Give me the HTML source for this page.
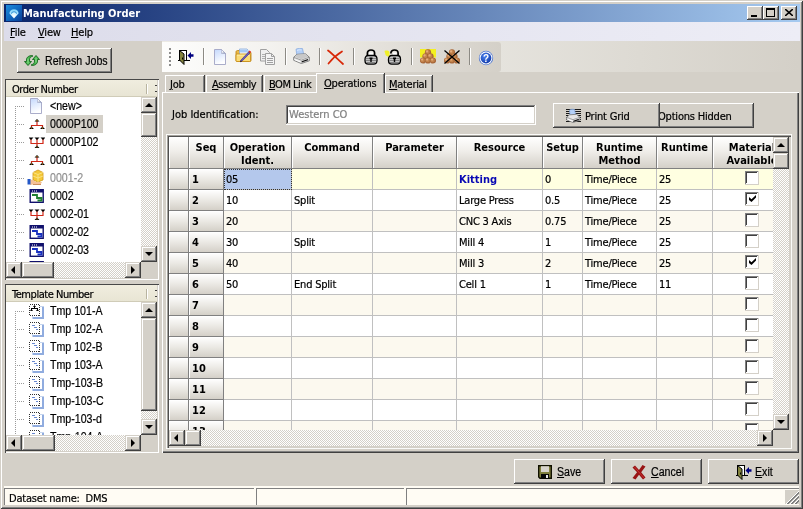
<!DOCTYPE html>
<html><head><meta charset="utf-8"><title>Manufacturing Order</title>
<style>
*{box-sizing:border-box;margin:0;padding:0}
html,body{width:803px;height:509px;overflow:hidden;background:#d4d0c8}
body{font-family:"DejaVu Sans Condensed","Liberation Sans",sans-serif;font-size:11px;color:#000;position:relative;line-height:13px;letter-spacing:-0.2px;-webkit-text-stroke:0.2px}
b,.hc,.rh,#title .t{letter-spacing:0;-webkit-text-stroke:0}
.ms{font-family:"Liberation Sans",sans-serif;font-size:12.5px;letter-spacing:0;transform:scaleX(.85);transform-origin:0 0;white-space:nowrap}
div,span,svg{position:absolute}
u{text-decoration:underline;text-underline-offset:1px;text-decoration-thickness:1px}
#win{left:0;top:0;width:803px;height:509px;background:#d4d0c8;will-change:transform;
 box-shadow:inset 1px 1px #d4d0c8,inset -1px -1px #404040,inset 2px 2px #fff,inset -2px -2px #808080}
#title{left:4px;top:4px;width:796px;height:18px;background:linear-gradient(90deg,#0a246a 0%,#a6caf0 100%)}
#title .t{left:19px;top:3px;color:#fff;font-weight:bold;font-size:11px;white-space:nowrap}
.cb{top:2px;width:16px;height:14px;background:#d4d0c8;
 box-shadow:inset -1px -1px #404040,inset 1px 1px #fff,inset -2px -2px #808080,inset 2px 2px #d4d0c8}
#menu{left:4px;top:22px;width:796px;height:19px;background:linear-gradient(90deg,#dcdcea,#ededf6)}
#menu span{top:4px}
.raised{background:#d4d0c8;box-shadow:inset -1px -1px #404040,inset 1px 1px #fff,inset -2px -2px #808080,inset 2px 2px #d4d0c8}
.sunken{box-shadow:inset -1px -1px #fff,inset 1px 1px #808080,inset -2px -2px #d4d0c8,inset 2px 2px #404040}
.btn{white-space:nowrap}
.btn span{white-space:nowrap}
.trk{background-color:#fff;background-image:conic-gradient(#d4d0c8 25%,#fff 0 50%,#d4d0c8 0 75%,#fff 0);background-size:2px 2px}
.sbb{width:16px;height:16px;background:#d4d0c8;box-shadow:inset -1px -1px #404040,inset 1px 1px #d4d0c8,inset -2px -2px #808080,inset 2px 2px #fff}
.thumb{background:#d4d0c8;box-shadow:inset -1px -1px #404040,inset 1px 1px #d4d0c8,inset -2px -2px #808080,inset 2px 2px #fff}
.ar{width:0;height:0;border:4px solid transparent}
.ar.up{border-top:0;border-bottom:4px solid #000;left:4px;top:6px}
.ar.dn{border-bottom:0;border-top:4px solid #000;left:4px;top:6px}
.ar.lf{border-left:0;border-right:4px solid #000;left:5px;top:4px}
.ar.rt{border-right:0;border-left:4px solid #000;left:6px;top:4px}
.panel{background:#fff}
.phead{left:2px;top:2px;height:16px;background:linear-gradient(180deg,#f0eddf,#e8e5d4);border-bottom:1px solid #d0ccb8}
.phead span{left:5px;top:1px;white-space:nowrap;letter-spacing:-0.45px}
.ti{left:0;height:18px;width:136px}
.ti .lbl{left:43px;top:3px}
.ti .sel{left:39px;top:0;height:18px;background:#d4d0c8}
.ti .hl{left:8px;top:9px;width:9px;border-top:1px dotted #9a9a9a}
.vl{left:15px;width:0;border-left:1px dotted #9a9a9a}
.sep{width:2px;height:17px;top:6px;border-left:1px solid #8c8a84;border-right:1px solid #fff}
.tab{height:18px;top:75px;background:#d4d0c8;border-top:1px solid #fff;border-left:1px solid #fff;box-shadow:1px 0 #404040, inset -1px 0 #808080}
.tab span{top:2px;white-space:nowrap}
#grid{left:166px;top:134px;width:626px;height:315px;background:#d4d0c8}
.hc{top:0;height:32px;background:linear-gradient(180deg,#fff 0%,#f0eeea 45%,#d4d0c8 100%);border-right:1px solid #808080;border-bottom:1px solid #808080;box-shadow:inset 1px 1px #fff;font-weight:bold;text-align:center;font-size:11px;line-height:13px;overflow:hidden}
.hc span{left:0;right:0;top:4px;position:absolute;text-align:center;white-space:nowrap}
.rh{left:0;height:21px;background:linear-gradient(180deg,#fff 0%,#ebe9e4 50%,#d4d0c8 100%);border-right:1px solid #808080;border-bottom:1px solid #808080;box-shadow:inset 1px 1px #fff;font-weight:bold}
.rh span{left:3px;top:4px}
.row{left:55px;height:21px;width:551px}
.c{top:0;height:21px;border-right:1px solid #c0c0c0;border-bottom:1px solid #c0c0c0;overflow:hidden}
.c span{left:2px;top:4px;white-space:nowrap}
.chk{width:14px;height:14px;left:32px;top:2px;background:#fff;box-shadow:inset -1px -1px #d4d0c8,inset 1px 1px #808080,inset -2px -2px #fff,inset 2px 2px #404040}
.sp{top:2px;height:17px;border-top:1px solid #808080;border-left:1px solid #808080}
</style></head><body>
<div id="win">
<div id="title"><svg style="left:2px;top:1px" width="16" height="16" viewBox="0 0 16 16"><defs><linearGradient id="ga" x1="0" y1="0" x2="1" y2="1"><stop offset="0" stop-color="#1c8cdc"/><stop offset=".5" stop-color="#1068c0"/><stop offset="1" stop-color="#083c94"/></linearGradient><radialGradient id="gb" cx=".5" cy=".75" r=".7"><stop offset="0" stop-color="#fff"/><stop offset=".6" stop-color="#c8f0ff"/><stop offset="1" stop-color="#7cd0f8"/></radialGradient></defs><rect width="16" height="16" fill="url(#ga)"/><path d="M3.300 8.200a4.800 4.800 0 0 1 9.400 0L8 13.500z" fill="url(#gb)"/><path d="M5.300 8.600a2.900 2.900 0 0 1 5.400 0" fill="none" stroke="#2890d8" stroke-width="1.100"/></svg><span class="t">Manufacturing Order</span><div class="cb" style="left:743px"><div style="left:4px;top:9px;width:6px;height:2px;background:#000"></div></div><div class="cb" style="left:759px"><div style="left:3px;top:2px;width:9px;height:9px;border:1px solid #000;border-top-width:2px"></div></div><div class="cb" style="left:777px"><svg style="left:4px;top:3px" width="8" height="7" viewBox="0 0 8 7"><path d="M0 0l8 7M8 0l-8 7" stroke="#000" stroke-width="1.600"/></svg></div></div>
<div id="menu"><span style="left:6px"><u>F</u>ile</span><span style="left:34px"><u>V</u>iew</span><span style="left:67px"><u>H</u>elp</span></div>
<div style="left:162px;top:41px;width:637px;height:31px;background:linear-gradient(90deg,#eceae4,#e6e4de 50%,#d4d0c8 100%)"></div>
<div class="btn raised" style="left:17px;top:48px;width:95px;height:25px"><svg style="left:7px;top:7px" width="16" height="11" viewBox="0 0 16 11"><path d="M8.500 .5C5 .5 2.500 2 2.500 5v1.500h-2l3.500 4 3.500-4h-2V5c0-2 1-3.500 3-3.500z" fill="#48b850" stroke="#186820" stroke-width=".9" stroke-linejoin="round"/><path d="M7.500 10.500c3.500 0 6-1.500 6-4.500V4.500h2l-3.500-4-3.500 4h2V6c0 2-1 3.500-3 3.500z" fill="#48b850" stroke="#186820" stroke-width=".9" stroke-linejoin="round"/><path d="M4 3.500v5M12 2.500v5" stroke="#90e090" stroke-width="1"/></svg><span class="ms" style="left:28px;top:7px">Refresh Jobs</span></div>
<div class="panel" style="left:5px;top:79px;width:154px;height:201px"><div class="phead" style="left:1px;top:1px;height:17px;width:151px"><span style="left:6px;top:3px">Order Number</span><div style="left:140px;top:4px;width:1px;height:10px;background:#b8b4a0"></div><div style="left:141px;top:4px;width:1px;height:10px;background:#fff"></div><div style="left:149px;top:5px;width:2px;height:1px;background:#404040"></div><div style="left:149px;top:11px;width:2px;height:1px;background:#404040"></div></div><div style="left:2px;top:18px;width:134px;height:165px;overflow:hidden"><div class="vl" style="left:8px;top:9px;height:165px"></div><div class="ti" style="top:0px"><div class="hl"></div><svg style="left:21px;top:1px" width="16" height="16" viewBox="0 0 16 16"><defs><linearGradient id="gd" x1="0" y1="0" x2=".3" y2="1"><stop offset="0" stop-color="#c4d8fc"/><stop offset="1" stop-color="#fff"/></linearGradient><linearGradient id="gf" x1="0" y1="0" x2="1" y2="1"><stop offset=".3" stop-color="#fff"/><stop offset="1" stop-color="#7888a8"/></linearGradient></defs><path d="M2.500 .5h7l4 4v11h-11z" fill="url(#gd)" stroke="#a0a4c4" stroke-width=".9"/><path d="M9.500 .5v4h4z" fill="url(#gf)" stroke="#a0a4c4" stroke-width=".6"/></svg><span class="lbl ms" style="color:#000">&lt;new&gt;</span></div><div class="ti" style="top:18px"><div class="hl"></div><svg style="left:22px;top:1px" width="16" height="16" viewBox="0 0 16 16"><path d="M8 5v4.500M2.500 11V9.500h11V11" fill="none" stroke="#d02818" stroke-width="1.200"/><path d="M5.500 5.500l2.500-2.500 2.500 2.500zM0 13l2.500-2.500 2.500 2.500zM11 13l2.500-2.500 2.500 2.500z" fill="#000"/><path d="M7.500 4.500h1M2 12h1M13 12h1" stroke="#f0a020"/></svg><div class="sel" style="width:57px"></div><span class="lbl ms" style="color:#000">0000P100</span></div><div class="ti" style="top:36px"><div class="hl"></div><svg style="left:22px;top:1px" width="16" height="16" viewBox="0 0 16 16"><path d="M2 5v4.500h12V5M8 5v7" fill="none" stroke="#d02818" stroke-width="1.200"/><path d="M-.5 3.500h5l-2.500 2.500zM5.500 3.500h5l-2.500 2.500zM11.500 3.500h5l-2.500 2.500zM5.500 14l2.500-2.500 2.500 2.500z" fill="#000"/><path d="M7.500 13h1" stroke="#f0a020"/></svg><span class="lbl ms" style="color:#000">0000P102</span></div><div class="ti" style="top:54px"><div class="hl"></div><svg style="left:22px;top:1px" width="16" height="16" viewBox="0 0 16 16"><path d="M8 5v4.500M2.500 11V9.500h11V11" fill="none" stroke="#d02818" stroke-width="1.200"/><path d="M5.500 5.500l2.500-2.500 2.500 2.500zM0 13l2.500-2.500 2.500 2.500zM11 13l2.500-2.500 2.500 2.500z" fill="#000"/><path d="M7.500 4.500h1M2 12h1M13 12h1" stroke="#f0a020"/></svg><span class="lbl ms" style="color:#000">0001</span></div><div class="ti" style="top:72px"><div class="hl"></div><svg style="left:20px;top:0px" width="18" height="17" viewBox="0 0 18 17"><path d="M6 3.500l5-2.500 5 2.500v7.500l-5 2-5-2z" fill="#f4c838" stroke="#d09818" stroke-width=".8"/><path d="M6 3.500l5 2 5-2M11 5.500v7.500M6 7l5 2 5-2" fill="none" stroke="#fbe890" stroke-width=".8"/><path d="M3 10.500l3 .5 3 2h6l-1.500 2.500H6l-3 .5z" fill="#f4c098"/><path d="M6 15.500h8" stroke="#c07840" stroke-width=".8"/><rect x=".5" y="10" width="3" height="5.500" fill="#2458c8"/></svg><span class="lbl ms" style="color:#909090">0001-2</span></div><div class="ti" style="top:90px"><div class="hl"></div><svg style="left:22px;top:1px" width="16" height="16" viewBox="0 0 16 16"><rect x="1.200" y="1.700" width="13" height="12.600" fill="#fff" stroke="#10106c" stroke-width="1.400"/><rect x="1" y="1.500" width="13.400" height="3" fill="#10106c"/><path d="M3 3h1M5 3h1M7 3h1" stroke="#fff"/><path d="M3 7h5v3h4.500v2.500h-4" fill="none" stroke="#208030" stroke-width="1.800"/></svg><span class="lbl ms" style="color:#000">0002</span></div><div class="ti" style="top:108px"><div class="hl"></div><svg style="left:22px;top:1px" width="16" height="16" viewBox="0 0 16 16"><path d="M2 5v4.500h12V5M8 5v7" fill="none" stroke="#d02818" stroke-width="1.200"/><path d="M-.5 3.500h5l-2.500 2.500zM5.500 3.500h5l-2.500 2.500zM11.500 3.500h5l-2.500 2.500zM5.500 14l2.500-2.500 2.500 2.500z" fill="#000"/><path d="M7.500 13h1" stroke="#f0a020"/></svg><span class="lbl ms" style="color:#000">0002-01</span></div><div class="ti" style="top:126px"><div class="hl"></div><svg style="left:22px;top:1px" width="16" height="16" viewBox="0 0 16 16"><rect x="1.200" y="1.700" width="13" height="12.600" fill="#fff" stroke="#10106c" stroke-width="1.400"/><rect x="1" y="1.500" width="13.400" height="3" fill="#10106c"/><path d="M3 3h1M5 3h1M7 3h1" stroke="#fff"/><path d="M3 7h5v3h4.500v2.500h-4" fill="none" stroke="#1830c0" stroke-width="1.800"/></svg><span class="lbl ms" style="color:#000">0002-02</span></div><div class="ti" style="top:144px"><div class="hl"></div><svg style="left:22px;top:1px" width="16" height="16" viewBox="0 0 16 16"><rect x="1.200" y="1.700" width="13" height="12.600" fill="#fff" stroke="#10106c" stroke-width="1.400"/><rect x="1" y="1.500" width="13.400" height="3" fill="#10106c"/><path d="M3 3h1M5 3h1M7 3h1" stroke="#fff"/><path d="M3 7h5v3h4.500v2.500h-4" fill="none" stroke="#1830c0" stroke-width="1.800"/></svg><span class="lbl ms" style="color:#000">0002-03</span></div><div class="ti" style="top:162px"><div class="hl"></div><svg style="left:22px;top:1px" width="16" height="16" viewBox="0 0 16 16"><rect x="1.200" y="1.700" width="13" height="12.600" fill="#fff" stroke="#10106c" stroke-width="1.400"/><rect x="1" y="1.500" width="13.400" height="3" fill="#10106c"/><path d="M3 3h1M5 3h1M7 3h1" stroke="#fff"/><path d="M3 7h5v3h4.500v2.500h-4" fill="none" stroke="#1830c0" stroke-width="1.800"/></svg><span class="lbl ms" style="color:#000">0002-04</span></div></div><div class="trk" style="left:136px;top:18px;width:16px;height:165px"><div class="sbb" style="left:0;top:0"><div class="ar up"></div></div><div class="thumb" style="left:0;top:16px;width:16px;height:24px"></div><div class="sbb" style="left:0;top:149px"><div class="ar dn"></div></div></div><div class="trk" style="left:1px;top:183px;width:135px;height:16px"><div class="sbb" style="left:0;top:0"><div class="ar lf"></div></div><div class="thumb" style="left:16px;top:0;width:32px;height:16px"></div><div class="sbb" style="left:119px;top:0"><div class="ar rt"></div></div></div><div style="left:136px;top:183px;width:17px;height:17px;background:#d4d0c8"></div><div style="left:1px;top:199px;width:152px;height:1px;background:#d4d0c8"></div><div style="left:152px;top:1px;width:1px;height:199px;background:#d4d0c8"></div><div style="left:0;top:0;width:154px;height:201px;box-shadow:inset 1px 1px #484848,inset -1px -1px #fff"></div></div>
<div class="panel" style="left:5px;top:284px;width:154px;height:169px"><div class="phead" style="left:1px;top:1px;height:17px;width:151px"><span style="left:6px;top:3px">Template Number</span><div style="left:140px;top:4px;width:1px;height:10px;background:#b8b4a0"></div><div style="left:141px;top:4px;width:1px;height:10px;background:#fff"></div><div style="left:149px;top:5px;width:2px;height:1px;background:#404040"></div><div style="left:149px;top:11px;width:2px;height:1px;background:#404040"></div></div><div style="left:2px;top:18px;width:134px;height:133px;overflow:hidden"><div class="vl" style="left:8px;top:9px;height:133px"></div><div class="ti" style="top:0px"><div class="hl"></div><svg style="left:22px;top:1px" width="16" height="17" viewBox="0 0 16 17" shape-rendering="crispEdges"><rect x="3.500" y="3.500" width="11" height="12" fill="#fff" stroke="#c4d4ee"/><path d="M13.500 4v12M4 15h10" stroke="#90acdf" stroke-width="2" fill="none"/><rect x=".5" y="1.500" width="10" height="11" fill="#fff" stroke="#303030" stroke-dasharray="1 1"/><path d="M5.500 3.500v2M2.500 7V5.500h6V7" fill="none" stroke="#000" stroke-width="1"/><path d="M1 8h3l-1.500-2zM7 8h3l-1.500-2zM4 4h3l-1.500-2z" fill="#000" shape-rendering="auto"/></svg><span class="lbl ms" style="color:#000">Tmp 101-A</span></div><div class="ti" style="top:18px"><div class="hl"></div><svg style="left:22px;top:1px" width="16" height="17" viewBox="0 0 16 17" shape-rendering="crispEdges"><rect x="3.500" y="3.500" width="11" height="12" fill="#fff" stroke="#c4d4ee"/><path d="M13.500 4v12M4 15h10" stroke="#90acdf" stroke-width="2" fill="none"/><rect x=".5" y="1.500" width="10" height="11" fill="#fff" stroke="#303030" stroke-dasharray="1 1"/><path d="M3 4.500h3M5 6.500h3M7 8.500h2" fill="none" stroke="#6888d0" stroke-width="1"/></svg><span class="lbl ms" style="color:#000">Tmp 102-A</span></div><div class="ti" style="top:36px"><div class="hl"></div><svg style="left:22px;top:1px" width="16" height="17" viewBox="0 0 16 17" shape-rendering="crispEdges"><rect x="3.500" y="3.500" width="11" height="12" fill="#fff" stroke="#c4d4ee"/><path d="M13.500 4v12M4 15h10" stroke="#90acdf" stroke-width="2" fill="none"/><rect x=".5" y="1.500" width="10" height="11" fill="#fff" stroke="#303030" stroke-dasharray="1 1"/><path d="M3 4.500h3M5 6.500h3M7 8.500h2" fill="none" stroke="#6888d0" stroke-width="1"/></svg><span class="lbl ms" style="color:#000">Tmp 102-B</span></div><div class="ti" style="top:54px"><div class="hl"></div><svg style="left:22px;top:1px" width="16" height="17" viewBox="0 0 16 17" shape-rendering="crispEdges"><rect x="3.500" y="3.500" width="11" height="12" fill="#fff" stroke="#c4d4ee"/><path d="M13.500 4v12M4 15h10" stroke="#90acdf" stroke-width="2" fill="none"/><rect x=".5" y="1.500" width="10" height="11" fill="#fff" stroke="#303030" stroke-dasharray="1 1"/><path d="M3 4.500h3M5 6.500h3M7 8.500h2" fill="none" stroke="#6888d0" stroke-width="1"/></svg><span class="lbl ms" style="color:#000">Tmp 103-A</span></div><div class="ti" style="top:72px"><div class="hl"></div><svg style="left:22px;top:1px" width="16" height="17" viewBox="0 0 16 17" shape-rendering="crispEdges"><rect x="3.500" y="3.500" width="11" height="12" fill="#fff" stroke="#c4d4ee"/><path d="M13.500 4v12M4 15h10" stroke="#90acdf" stroke-width="2" fill="none"/><rect x=".5" y="1.500" width="10" height="11" fill="#fff" stroke="#303030" stroke-dasharray="1 1"/><path d="M3 4.500h3M5 6.500h3M7 8.500h2" fill="none" stroke="#6888d0" stroke-width="1"/></svg><span class="lbl ms" style="color:#000">Tmp-103-B</span></div><div class="ti" style="top:90px"><div class="hl"></div><svg style="left:22px;top:1px" width="16" height="17" viewBox="0 0 16 17" shape-rendering="crispEdges"><rect x="3.500" y="3.500" width="11" height="12" fill="#fff" stroke="#c4d4ee"/><path d="M13.500 4v12M4 15h10" stroke="#90acdf" stroke-width="2" fill="none"/><rect x=".5" y="1.500" width="10" height="11" fill="#fff" stroke="#303030" stroke-dasharray="1 1"/><path d="M3 4.500h3M5 6.500h3M7 8.500h2" fill="none" stroke="#6888d0" stroke-width="1"/></svg><span class="lbl ms" style="color:#000">Tmp-103-C</span></div><div class="ti" style="top:108px"><div class="hl"></div><svg style="left:22px;top:1px" width="16" height="17" viewBox="0 0 16 17" shape-rendering="crispEdges"><rect x="3.500" y="3.500" width="11" height="12" fill="#fff" stroke="#c4d4ee"/><path d="M13.500 4v12M4 15h10" stroke="#90acdf" stroke-width="2" fill="none"/><rect x=".5" y="1.500" width="10" height="11" fill="#fff" stroke="#303030" stroke-dasharray="1 1"/><path d="M3 4.500h3M5 6.500h3M7 8.500h2" fill="none" stroke="#6888d0" stroke-width="1"/></svg><span class="lbl ms" style="color:#000">Tmp-103-d</span></div><div class="ti" style="top:126px"><div class="hl"></div><svg style="left:22px;top:1px" width="16" height="17" viewBox="0 0 16 17" shape-rendering="crispEdges"><rect x="3.500" y="3.500" width="11" height="12" fill="#fff" stroke="#c4d4ee"/><path d="M13.500 4v12M4 15h10" stroke="#90acdf" stroke-width="2" fill="none"/><rect x=".5" y="1.500" width="10" height="11" fill="#fff" stroke="#303030" stroke-dasharray="1 1"/><path d="M3 4.500h3M5 6.500h3M7 8.500h2" fill="none" stroke="#6888d0" stroke-width="1"/></svg><span class="lbl ms" style="color:#000">Tmp-104-A</span></div></div><div class="trk" style="left:136px;top:18px;width:16px;height:133px"><div class="sbb" style="left:0;top:0"><div class="ar up"></div></div><div class="thumb" style="left:0;top:16px;width:16px;height:93px"></div><div class="sbb" style="left:0;top:117px"><div class="ar dn"></div></div></div><div class="trk" style="left:1px;top:151px;width:135px;height:16px"><div class="sbb" style="left:0;top:0"><div class="ar lf"></div></div><div class="thumb" style="left:16px;top:0;width:33px;height:16px"></div><div class="sbb" style="left:119px;top:0"><div class="ar rt"></div></div></div><div style="left:136px;top:151px;width:17px;height:17px;background:#d4d0c8"></div><div style="left:1px;top:167px;width:152px;height:1px;background:#d4d0c8"></div><div style="left:152px;top:1px;width:1px;height:167px;background:#d4d0c8"></div><div style="left:0;top:0;width:154px;height:169px;box-shadow:inset 1px 1px #484848,inset -1px -1px #fff"></div></div>
<div style="left:162px;top:42px;width:339px;height:30px;background:linear-gradient(90deg,#fdfdfc 0%,#f4f3f0 30%,#e4e1db 65%,#d4d0c8 100%);border-radius:0 3px 3px 0"><div style="left:7px;top:6px;width:2px;height:2px;background:#8c8c8c"></div><div style="left:7px;top:10px;width:2px;height:2px;background:#8c8c8c"></div><div style="left:7px;top:14px;width:2px;height:2px;background:#8c8c8c"></div><div style="left:7px;top:18px;width:2px;height:2px;background:#8c8c8c"></div><div style="left:7px;top:22px;width:2px;height:2px;background:#8c8c8c"></div><svg style="left:15px;top:7px" width="17" height="16" viewBox="0 0 17 16"><rect x="2.500" y="1.500" width="7" height="10" fill="#fff" stroke="#000"/><path d="M1 11.500h12" stroke="#000"/><path d="M2.500 1.500l4.500 3.500v10.500l-4.500-4.500z" fill="#84843e" stroke="#000" stroke-width="1"/><path d="M5.500 8.500v2" stroke="#000"/><path d="M10.500 6.500l3.500-3.500v2.200h2.500v2.600H14V10z" fill="#000080"/></svg><div class="sep" style="left:41px"></div><svg style="left:50px;top:7px" width="16" height="16" viewBox="0 0 16 16"><defs><linearGradient id="gd" x1="0" y1="0" x2=".3" y2="1"><stop offset="0" stop-color="#c4d8fc"/><stop offset="1" stop-color="#fff"/></linearGradient><linearGradient id="gf" x1="0" y1="0" x2="1" y2="1"><stop offset=".3" stop-color="#fff"/><stop offset="1" stop-color="#7888a8"/></linearGradient></defs><path d="M2.500 .5h7l4 4v11h-11z" fill="url(#gd)" stroke="#a0a4c4" stroke-width=".9"/><path d="M9.500 .5v4h4z" fill="url(#gf)" stroke="#a0a4c4" stroke-width=".6"/></svg><svg style="left:73px;top:6px" width="17" height="16" viewBox="0 0 17 16"><path d="M1 4c0-1 .8-1.500 1.500-1.500h2.500l1 1.500h9c.7 0 1 .5 1 1v7.500c0 .6-.5 1-1 1h-13c-.6 0-1-.4-1-1z" fill="#eab848" stroke="#c08818" stroke-width=".9"/><path d="M4.500 1h7.500l1 1v7h-8.500z" fill="#fff" stroke="#88a8d8" stroke-width=".8"/><path d="M4.900 1.400h7l.7 .8v2.300h-7.700z" fill="#a4c8f6"/><path d="M1 7c0-.6.500-1 1-1h12.500c.6 0 1 .4 1 1v5.500c0 .6-.5 1-1 1h-12.500c-.6 0-1-.4-1-1z" fill="#fbdc78" stroke="#c8901c" stroke-width=".9"/><path d="M2 7.200h12.500" stroke="#fdf0b8" stroke-width=".8"/><path d="M13.800 3.800l1.200 1.200-8 8.200-1.600 .6 .5-1.700z" fill="#6c5cc0" stroke="#3c3078" stroke-width=".6"/><path d="M13.600 3.600l1.100-1.200 1.500 1.500-1.200 1.100z" fill="#e02424"/><path d="M5.200 14l.5-1.700 1.100 1.100z" fill="#301808"/></svg><svg style="left:98px;top:7px" width="16" height="16" viewBox="0 0 16 16"><path d="M.5 .5h6l3 3v8.500h-9z" fill="#f0f0f0" stroke="#a0a0a0"/><path d="M2 5.500h4M2 7.500h3M2 9.500h3" stroke="#b0b0b0"/><path d="M5.500 4.500h6l3 3v8h-9z" fill="#f4f4f4" stroke="#a0a0a0"/><path d="M11.500 4.500v3h3" fill="none" stroke="#a0a0a0"/><path d="M7 9.500h6M7 11.500h6M7 13.500h6" stroke="#a0a0a0"/></svg><div class="sep" style="left:123px"></div><svg style="left:131px;top:6px" width="17" height="16" viewBox="0 0 17 16"><path d="M3 1.200c2.500-1.200 4.500-1 6.500-.6l1.500 7-7 1.500-.5-4z" fill="#b4d0f8" stroke="#84a8dc" stroke-width=".7"/><path d="M4 2.500c1.500-.8 3-.8 4.500-.5" stroke="#e4f0ff" stroke-width=".8" fill="none"/><path d="M.7 9.300l3.300-3 8.500-.5 3.800 3.400v3.600l-8 2.700-7.600-3.200z" fill="#e4e4e4" stroke="#787878" stroke-width=".9"/><path d="M.7 9.300l7.600 2.900 8-3" fill="none" stroke="#8c8c8c" stroke-width=".8"/><path d="M4.300 6.600l8-.5 2.700 2.700-6.700 2.400-6-2.300z" fill="#c8c8c8"/><path d="M8.600 13.300l6.400-2.300v1.300l-6.400 2.300z" fill="#101010"/><path d="M1.500 11l6 2.400v1.200l-6-2.500z" fill="#fff"/></svg><div class="sep" style="left:157px"></div><svg style="left:165px;top:7px" width="17" height="16" viewBox="0 0 17 16"><path d="M1 1.500c4 3 9 8 15 13.500M15 2.500c-5 3-10 7.500-13.500 12" fill="none" stroke="#d82808" stroke-width="1.700" stroke-linecap="round"/></svg><div class="sep" style="left:191px"></div><svg style="left:202px;top:7px" width="15" height="16" viewBox="0 0 15 16"><path d="M3.400 7v-3c0-1.800 1.400-3 3.600-3s3.600 1.200 3.600 3v3" fill="none" stroke="#000" stroke-width="1.700"/><rect x="5" y="3.500" width="4" height="3" fill="#fff"/><path d="M1 10.300c0-2.700 1.500-3.800 3.200-3.800h5.600c1.700 0 3.200 1.100 3.200 3.800v1.200c0 2.600-1.500 3.700-3.200 3.700h-5.600c-1.700 0-3.200-1.100-3.200-3.700z" fill="#c4c4c4" stroke="#000" stroke-width="1.300"/><path d="M2 9.500h10M2 11.500h10M2.500 13.500h9" stroke="#7c7c7c" stroke-width=".9"/><path d="M5.500 8.500h3v1.500l-.8 .5v2.500h-1.400v-2.500l-.8-.5z" fill="#000"/></svg><svg style="left:222px;top:7px" width="18" height="16" viewBox="0 0 18 16"><path d="M.5 2c2-.8 4-.3 5 1v4.500c-1.500 .3-3.500-.5-4-1.800z" fill="#f0f028"/><g transform="translate(3.500 0)"><path d="M3.400 4.500v-.5c0-1.800 1.400-3 3.600-3s3.600 1.200 3.600 3v3" fill="none" stroke="#000" stroke-width="1.700"/><rect x="5.500" y="3.500" width="3.500" height="3" fill="#fff"/><path d="M1 10.300c0-2.700 1.500-3.800 3.200-3.800h5.600c1.700 0 3.200 1.100 3.200 3.800v1.200c0 2.600-1.500 3.700-3.200 3.700h-5.600c-1.700 0-3.200-1.100-3.200-3.700z" fill="#c4c4c4" stroke="#000" stroke-width="1.300"/><path d="M2 9.500h10M2 11.500h10M2.500 13.500h9" stroke="#7c7c7c" stroke-width=".9"/><path d="M5.500 8.500h3v1.500l-.8 .5v2.500h-1.400v-2.500l-.8-.5z" fill="#000"/></g></svg><div class="sep" style="left:249px"></div><svg style="left:258px;top:7px" width="16" height="15" viewBox="0 0 16 15"><rect x="0" y="0" width="16" height="8.500" fill="#f4f020"/><circle cx="8" cy="3.3" r="3.100" fill="#a8683a"/><circle cx="7.6" cy="2.9" r="2.200" fill="#c4844c"/><circle cx="7.1" cy="2.4" r="1.100" fill="#e4ac7c"/><circle cx="5.5" cy="7.3" r="3.100" fill="#a8683a"/><circle cx="5.1" cy="6.8999999999999995" r="2.200" fill="#c4844c"/><circle cx="4.6" cy="6.3999999999999995" r="1.100" fill="#e4ac7c"/><circle cx="10.5" cy="7.3" r="3.100" fill="#a8683a"/><circle cx="10.1" cy="6.8999999999999995" r="2.200" fill="#c4844c"/><circle cx="9.6" cy="6.3999999999999995" r="1.100" fill="#e4ac7c"/><circle cx="3" cy="11.5" r="3.100" fill="#a8683a"/><circle cx="2.6" cy="11.1" r="2.200" fill="#c4844c"/><circle cx="2.1" cy="10.6" r="1.100" fill="#e4ac7c"/><circle cx="8" cy="11.5" r="3.100" fill="#a8683a"/><circle cx="7.6" cy="11.1" r="2.200" fill="#c4844c"/><circle cx="7.1" cy="10.6" r="1.100" fill="#e4ac7c"/><circle cx="13" cy="11.5" r="3.100" fill="#a8683a"/><circle cx="12.6" cy="11.1" r="2.200" fill="#c4844c"/><circle cx="12.1" cy="10.6" r="1.100" fill="#e4ac7c"/></svg><svg style="left:282px;top:7px" width="16" height="15" viewBox="0 0 16 15"><circle cx="8" cy="3.3" r="3.100" fill="#a8683a"/><circle cx="7.6" cy="2.9" r="2.200" fill="#c4844c"/><circle cx="7.1" cy="2.4" r="1.100" fill="#e4ac7c"/><circle cx="5.5" cy="7.3" r="3.100" fill="#a8683a"/><circle cx="5.1" cy="6.8999999999999995" r="2.200" fill="#c4844c"/><circle cx="4.6" cy="6.3999999999999995" r="1.100" fill="#e4ac7c"/><circle cx="10.5" cy="7.3" r="3.100" fill="#a8683a"/><circle cx="10.1" cy="6.8999999999999995" r="2.200" fill="#c4844c"/><circle cx="9.6" cy="6.3999999999999995" r="1.100" fill="#e4ac7c"/><circle cx="3" cy="11.5" r="3.100" fill="#a8683a"/><circle cx="2.6" cy="11.1" r="2.200" fill="#c4844c"/><circle cx="2.1" cy="10.6" r="1.100" fill="#e4ac7c"/><circle cx="8" cy="11.5" r="3.100" fill="#a8683a"/><circle cx="7.6" cy="11.1" r="2.200" fill="#c4844c"/><circle cx="7.1" cy="10.6" r="1.100" fill="#e4ac7c"/><circle cx="13" cy="11.5" r="3.100" fill="#a8683a"/><circle cx="12.6" cy="11.1" r="2.200" fill="#c4844c"/><circle cx="12.1" cy="10.6" r="1.100" fill="#e4ac7c"/><path d="M.5 1.500l15 13M15.500 1.500l-15 13" stroke="#000" stroke-width="1.300"/></svg><div class="sep" style="left:307px"></div><svg style="left:316px;top:8px" width="16" height="16" viewBox="0 0 16 16"><defs><radialGradient id="gh" cx=".4" cy=".35" r=".7"><stop offset="0" stop-color="#4c84f0"/><stop offset="1" stop-color="#1038a8"/></radialGradient></defs><circle cx="8" cy="8" r="7.200" fill="#5078d0"/><circle cx="8" cy="8" r="6.400" fill="#fff"/><circle cx="8" cy="8" r="5.400" fill="url(#gh)"/><text x="8" y="11.500" font-family="Liberation Sans,sans-serif" font-weight="bold" font-size="10" fill="#fff" text-anchor="middle">?</text></svg></div>
<div class="tab" style="left:165px;width:39px;"><span style="left:4px;letter-spacing:-0.2px"><u>J</u>ob</span></div><div class="tab" style="left:206px;width:56px;"><span style="left:5px;letter-spacing:-0.45px"><u>A</u>ssembly</span></div><div class="tab" style="left:264px;width:52px;box-shadow:none"><span style="left:4px;letter-spacing:-0.5px"><u>B</u>OM Link</span></div><div class="tab" style="left:385px;width:47px;"><span style="left:3px;letter-spacing:-0.3px"><u>M</u>aterial</span></div><div style="left:162px;top:92px;width:637px;height:361px;background:#d4d0c8;box-shadow:inset 1px 1px #fff,inset -1px -1px #404040,inset -2px -2px #808080"></div><div style="left:316px;top:73px;width:68px;height:20px;background:#d4d0c8;border-top:1px solid #fff;border-left:1px solid #fff;box-shadow:1px 0 #404040, inset -1px 0 #808080"><span style="left:7px;top:3px;white-space:nowrap"><u>O</u>perations</span></div>
<span style="left:172px;top:108px;white-space:nowrap;letter-spacing:0">Job Identification:</span><div class="sunken" style="left:286px;top:105px;width:250px;height:20px;background:#fff"><span style="left:3px;top:3px;color:#808080;white-space:nowrap;letter-spacing:0">Western CO</span></div><div class="btn raised" style="left:656px;top:103px;width:98px;height:25px;overflow:hidden"><span style="left:2px;top:7px">Options Hidden</span></div><div class="btn raised" style="left:553px;top:103px;width:107px;height:25px"><svg style="left:12px;top:5px" width="17" height="16" viewBox="0 0 17 16"><path d="M1 1.500h15M1 3.500h15M1 5.500h15M1 7.500h15M1 9.500h15M1 11.500h15M1 13.500h15" stroke="#181818" shape-rendering="crispEdges"/><path d="M4.500 2c1.500-1 3.500-1 5-.5l1.200 5.500-5.500 1.200z" fill="#b4d0f8" stroke="#84a8dc" stroke-width=".7"/><path d="M1.700 9.300l2.800-2.500 7-.5 3.300 2.900v3l-6.800 2.300-6.300-2.700z" fill="#e6e6e6" stroke="#808080" stroke-width=".9"/><path d="M1.700 9.300l6.300 2.400 6.800-2.500" fill="none" stroke="#909090" stroke-width=".8"/><path d="M8.300 12.800l5.500-2v1.200l-5.500 2z" fill="#101010"/><path d="M2.500 10.800l5 2v1l-5-2z" fill="#fff"/></svg><span style="left:32px;top:7px">Print Grid</span></div>
<div id="grid"><div style="left:3px;top:3px;width:620px;height:309px;overflow:hidden;background:#fff"><div class="hc" style="left:0px;width:20px"><span></span></div><div class="hc" style="left:20px;width:35px"><span>Seq</span></div><div class="hc" style="left:55px;width:68px"><span>Operation<br>Ident.</span></div><div class="hc" style="left:123px;width:81px"><span>Command</span></div><div class="hc" style="left:204px;width:84px"><span>Parameter</span></div><div class="hc" style="left:288px;width:86px"><span>Resource</span></div><div class="hc" style="left:374px;width:40px"><span>Setup</span></div><div class="hc" style="left:414px;width:74px"><span>Runtime<br>Method</span></div><div class="hc" style="left:488px;width:56px"><span>Runtime</span></div><div class="hc" style="left:544px;width:62px"><span style="left:9px;width:60px;right:auto">Material<br>Available</span></div><div class="rh" style="top:32px;width:20px"></div><div class="rh" style="left:20px;top:32px;width:35px"><span>1</span></div><div class="row" style="top:32px;background:#ffffe1"><div class="c" style="left:0px;width:68px;background:#b4c8ec;outline:1px dotted #333;outline-offset:-1px;"><span style="">05</span></div><div class="c" style="left:68px;width:81px;"><span style=""></span></div><div class="c" style="left:149px;width:84px;"><span style=""></span></div><div class="c" style="left:233px;width:86px;"><span style="font-weight:bold;color:#0808b4;letter-spacing:0;-webkit-text-stroke:0">Kitting</span></div><div class="c" style="left:319px;width:40px;"><span style="">0</span></div><div class="c" style="left:359px;width:74px;"><span style="">Time/Piece</span></div><div class="c" style="left:433px;width:56px;"><span style="">25</span></div><div class="c" style="left:489px;width:62px"><div class="chk"></div></div></div><div class="rh" style="top:53px;width:20px"></div><div class="rh" style="left:20px;top:53px;width:35px"><span>2</span></div><div class="row" style="top:53px;background:#fff"><div class="c" style="left:0px;width:68px;"><span style="">10</span></div><div class="c" style="left:68px;width:81px;"><span style="">Split</span></div><div class="c" style="left:149px;width:84px;"><span style=""></span></div><div class="c" style="left:233px;width:86px;"><span style="">Large Press</span></div><div class="c" style="left:319px;width:40px;"><span style="">0.5</span></div><div class="c" style="left:359px;width:74px;"><span style="">Time/Piece</span></div><div class="c" style="left:433px;width:56px;"><span style="">25</span></div><div class="c" style="left:489px;width:62px"><div class="chk"><svg style="left:4px;top:3px" width="7" height="7" viewBox="0 0 7 7"><path d="M0 2v3l2.500 2 4.500-4.500V0L2.500 4.200z" fill="#000"/></svg></div></div></div><div class="rh" style="top:74px;width:20px"></div><div class="rh" style="left:20px;top:74px;width:35px"><span>3</span></div><div class="row" style="top:74px;background:#fcf9ef"><div class="c" style="left:0px;width:68px;"><span style="">20</span></div><div class="c" style="left:68px;width:81px;"><span style=""></span></div><div class="c" style="left:149px;width:84px;"><span style=""></span></div><div class="c" style="left:233px;width:86px;"><span style="">CNC 3 Axis</span></div><div class="c" style="left:319px;width:40px;"><span style="">0.75</span></div><div class="c" style="left:359px;width:74px;"><span style="">Time/Piece</span></div><div class="c" style="left:433px;width:56px;"><span style="">25</span></div><div class="c" style="left:489px;width:62px"><div class="chk"></div></div></div><div class="rh" style="top:95px;width:20px"></div><div class="rh" style="left:20px;top:95px;width:35px"><span>4</span></div><div class="row" style="top:95px;background:#fff"><div class="c" style="left:0px;width:68px;"><span style="">30</span></div><div class="c" style="left:68px;width:81px;"><span style="">Split</span></div><div class="c" style="left:149px;width:84px;"><span style=""></span></div><div class="c" style="left:233px;width:86px;"><span style="">Mill 4</span></div><div class="c" style="left:319px;width:40px;"><span style="">1</span></div><div class="c" style="left:359px;width:74px;"><span style="">Time/Piece</span></div><div class="c" style="left:433px;width:56px;"><span style="">25</span></div><div class="c" style="left:489px;width:62px"><div class="chk"></div></div></div><div class="rh" style="top:116px;width:20px"></div><div class="rh" style="left:20px;top:116px;width:35px"><span>5</span></div><div class="row" style="top:116px;background:#fcf9ef"><div class="c" style="left:0px;width:68px;"><span style="">40</span></div><div class="c" style="left:68px;width:81px;"><span style=""></span></div><div class="c" style="left:149px;width:84px;"><span style=""></span></div><div class="c" style="left:233px;width:86px;"><span style="">Mill 3</span></div><div class="c" style="left:319px;width:40px;"><span style="">2</span></div><div class="c" style="left:359px;width:74px;"><span style="">Time/Piece</span></div><div class="c" style="left:433px;width:56px;"><span style="">25</span></div><div class="c" style="left:489px;width:62px"><div class="chk"><svg style="left:4px;top:3px" width="7" height="7" viewBox="0 0 7 7"><path d="M0 2v3l2.500 2 4.500-4.500V0L2.500 4.200z" fill="#000"/></svg></div></div></div><div class="rh" style="top:137px;width:20px"></div><div class="rh" style="left:20px;top:137px;width:35px"><span>6</span></div><div class="row" style="top:137px;background:#fff"><div class="c" style="left:0px;width:68px;"><span style="">50</span></div><div class="c" style="left:68px;width:81px;"><span style="">End Split</span></div><div class="c" style="left:149px;width:84px;"><span style=""></span></div><div class="c" style="left:233px;width:86px;"><span style="">Cell 1</span></div><div class="c" style="left:319px;width:40px;"><span style="">1</span></div><div class="c" style="left:359px;width:74px;"><span style="">Time/Piece</span></div><div class="c" style="left:433px;width:56px;"><span style="">11</span></div><div class="c" style="left:489px;width:62px"><div class="chk"></div></div></div><div class="rh" style="top:158px;width:20px"></div><div class="rh" style="left:20px;top:158px;width:35px"><span>7</span></div><div class="row" style="top:158px;background:#fcf9ef"><div class="c" style="left:0px;width:68px;"><span style=""></span></div><div class="c" style="left:68px;width:81px;"><span style=""></span></div><div class="c" style="left:149px;width:84px;"><span style=""></span></div><div class="c" style="left:233px;width:86px;"><span style=""></span></div><div class="c" style="left:319px;width:40px;"><span style=""></span></div><div class="c" style="left:359px;width:74px;"><span style=""></span></div><div class="c" style="left:433px;width:56px;"><span style=""></span></div><div class="c" style="left:489px;width:62px"><div class="chk"></div></div></div><div class="rh" style="top:179px;width:20px"></div><div class="rh" style="left:20px;top:179px;width:35px"><span>8</span></div><div class="row" style="top:179px;background:#fff"><div class="c" style="left:0px;width:68px;"><span style=""></span></div><div class="c" style="left:68px;width:81px;"><span style=""></span></div><div class="c" style="left:149px;width:84px;"><span style=""></span></div><div class="c" style="left:233px;width:86px;"><span style=""></span></div><div class="c" style="left:319px;width:40px;"><span style=""></span></div><div class="c" style="left:359px;width:74px;"><span style=""></span></div><div class="c" style="left:433px;width:56px;"><span style=""></span></div><div class="c" style="left:489px;width:62px"><div class="chk"></div></div></div><div class="rh" style="top:200px;width:20px"></div><div class="rh" style="left:20px;top:200px;width:35px"><span>9</span></div><div class="row" style="top:200px;background:#fcf9ef"><div class="c" style="left:0px;width:68px;"><span style=""></span></div><div class="c" style="left:68px;width:81px;"><span style=""></span></div><div class="c" style="left:149px;width:84px;"><span style=""></span></div><div class="c" style="left:233px;width:86px;"><span style=""></span></div><div class="c" style="left:319px;width:40px;"><span style=""></span></div><div class="c" style="left:359px;width:74px;"><span style=""></span></div><div class="c" style="left:433px;width:56px;"><span style=""></span></div><div class="c" style="left:489px;width:62px"><div class="chk"></div></div></div><div class="rh" style="top:221px;width:20px"></div><div class="rh" style="left:20px;top:221px;width:35px"><span>10</span></div><div class="row" style="top:221px;background:#fff"><div class="c" style="left:0px;width:68px;"><span style=""></span></div><div class="c" style="left:68px;width:81px;"><span style=""></span></div><div class="c" style="left:149px;width:84px;"><span style=""></span></div><div class="c" style="left:233px;width:86px;"><span style=""></span></div><div class="c" style="left:319px;width:40px;"><span style=""></span></div><div class="c" style="left:359px;width:74px;"><span style=""></span></div><div class="c" style="left:433px;width:56px;"><span style=""></span></div><div class="c" style="left:489px;width:62px"><div class="chk"></div></div></div><div class="rh" style="top:242px;width:20px"></div><div class="rh" style="left:20px;top:242px;width:35px"><span>11</span></div><div class="row" style="top:242px;background:#fcf9ef"><div class="c" style="left:0px;width:68px;"><span style=""></span></div><div class="c" style="left:68px;width:81px;"><span style=""></span></div><div class="c" style="left:149px;width:84px;"><span style=""></span></div><div class="c" style="left:233px;width:86px;"><span style=""></span></div><div class="c" style="left:319px;width:40px;"><span style=""></span></div><div class="c" style="left:359px;width:74px;"><span style=""></span></div><div class="c" style="left:433px;width:56px;"><span style=""></span></div><div class="c" style="left:489px;width:62px"><div class="chk"></div></div></div><div class="rh" style="top:263px;width:20px"></div><div class="rh" style="left:20px;top:263px;width:35px"><span>12</span></div><div class="row" style="top:263px;background:#fff"><div class="c" style="left:0px;width:68px;"><span style=""></span></div><div class="c" style="left:68px;width:81px;"><span style=""></span></div><div class="c" style="left:149px;width:84px;"><span style=""></span></div><div class="c" style="left:233px;width:86px;"><span style=""></span></div><div class="c" style="left:319px;width:40px;"><span style=""></span></div><div class="c" style="left:359px;width:74px;"><span style=""></span></div><div class="c" style="left:433px;width:56px;"><span style=""></span></div><div class="c" style="left:489px;width:62px"><div class="chk"></div></div></div><div class="rh" style="top:284px;width:20px"></div><div class="rh" style="left:20px;top:284px;width:35px"><span>13</span></div><div class="row" style="top:284px;background:#fcf9ef"><div class="c" style="left:0px;width:68px;"><span style=""></span></div><div class="c" style="left:68px;width:81px;"><span style=""></span></div><div class="c" style="left:149px;width:84px;"><span style=""></span></div><div class="c" style="left:233px;width:86px;"><span style=""></span></div><div class="c" style="left:319px;width:40px;"><span style=""></span></div><div class="c" style="left:359px;width:74px;"><span style=""></span></div><div class="c" style="left:433px;width:56px;"><span style=""></span></div><div class="c" style="left:489px;width:62px"><div class="chk"></div></div></div><div class="trk" style="left:604px;top:0px;width:16px;height:293px"><div class="sbb" style="left:0;top:0"><div class="ar up"></div></div><div class="thumb" style="left:0;top:16px;width:16px;height:16px"></div><div class="sbb" style="left:0;top:277px"><div class="ar dn"></div></div></div><div class="trk" style="left:0px;top:293px;width:604px;height:16px"><div class="sbb" style="left:0;top:0"><div class="ar lf"></div></div><div class="thumb" style="left:16px;top:0;width:16px;height:16px"></div><div class="sbb" style="left:588px;top:0"><div class="ar rt"></div></div></div><div style="left:604px;top:293px;width:16px;height:16px;background:#d4d0c8"></div></div><div style="left:0;top:0;width:626px;height:315px;box-shadow:inset 1px 1px #fbfbf9,inset -1px -1px #fbfbf9,inset 2px 2px #a4a29c,inset 3px 3px #505050"></div></div>
<div class="btn raised" style="left:514px;top:459px;width:91px;height:25px"><svg style="left:24px;top:6px" width="14" height="14" viewBox="0 0 14 14"><path d="M.7 .7h12.600v12.600H2L.7 12z" fill="#80803c" stroke="#101000" stroke-width="1.400"/><rect x="3" y="1.200" width="8" height="5.800" fill="#d8d4cc"/><rect x="3" y="9" width="8" height="4.500" fill="#080808"/><rect x="8" y="10" width="2" height="3" fill="#e8e8e8"/></svg><span class="ms" style="left:43px;top:7px"><u>S</u>ave</span></div><div class="btn raised" style="left:611px;top:459px;width:91px;height:25px"><svg style="left:21px;top:6px" width="14" height="15" viewBox="0 0 14 15"><path d="M.5 2.500l2.500-2 4 4.500 3.500-5 3 1.500-4.300 5.800 4.300 5.200-2.500 2-4-4.700-3.500 4.700-3-1.500 4.500-5.700z" fill="#981414"/><path d="M2.500 2l9.500 11" stroke="#c83030" stroke-width="1" fill="none"/></svg><span class="ms" style="left:40px;top:7px"><u>C</u>ancel</span></div><div class="btn raised" style="left:708px;top:459px;width:91px;height:25px"><svg style="left:27px;top:5px" width="17" height="16" viewBox="0 0 17 16"><rect x="2.500" y="1.500" width="7" height="10" fill="#fff" stroke="#000"/><path d="M1 11.500h12" stroke="#000"/><path d="M2.500 1.500l4.500 3.500v10.500l-4.500-4.500z" fill="#84843e" stroke="#000" stroke-width="1"/><path d="M5.500 8.500v2" stroke="#000"/><path d="M10.500 6.500l3.500-3.500v2.200h2.500v2.600H14V10z" fill="#000080"/></svg><span class="ms" style="left:47px;top:7px"><u>E</u>xit</span></div>
<div style="left:4px;top:486px;width:795px;height:19px;background:#fffcf4"><div class="sp" style="left:0px;width:250px"><span style="left:4px;top:3px;white-space:nowrap">Dataset name:&nbsp; DMS</span></div><div class="sp" style="left:252px;width:148px"></div><div class="sp" style="left:402px;width:393px"></div><svg style="left:781px;top:4px" width="14" height="14" viewBox="0 0 14 14"><rect width="14" height="14" fill="#d4d0c8"/><path d="M14 2L2 14M14 6L6 14M14 10L10 14" stroke="#808080"/><path d="M14 3L3 14M14 7L7 14M14 11L11 14" stroke="#808080"/><path d="M14 1L1 14M14 5L5 14M14 9L9 14" stroke="#fff"/></svg></div>
</div>
</body></html>
